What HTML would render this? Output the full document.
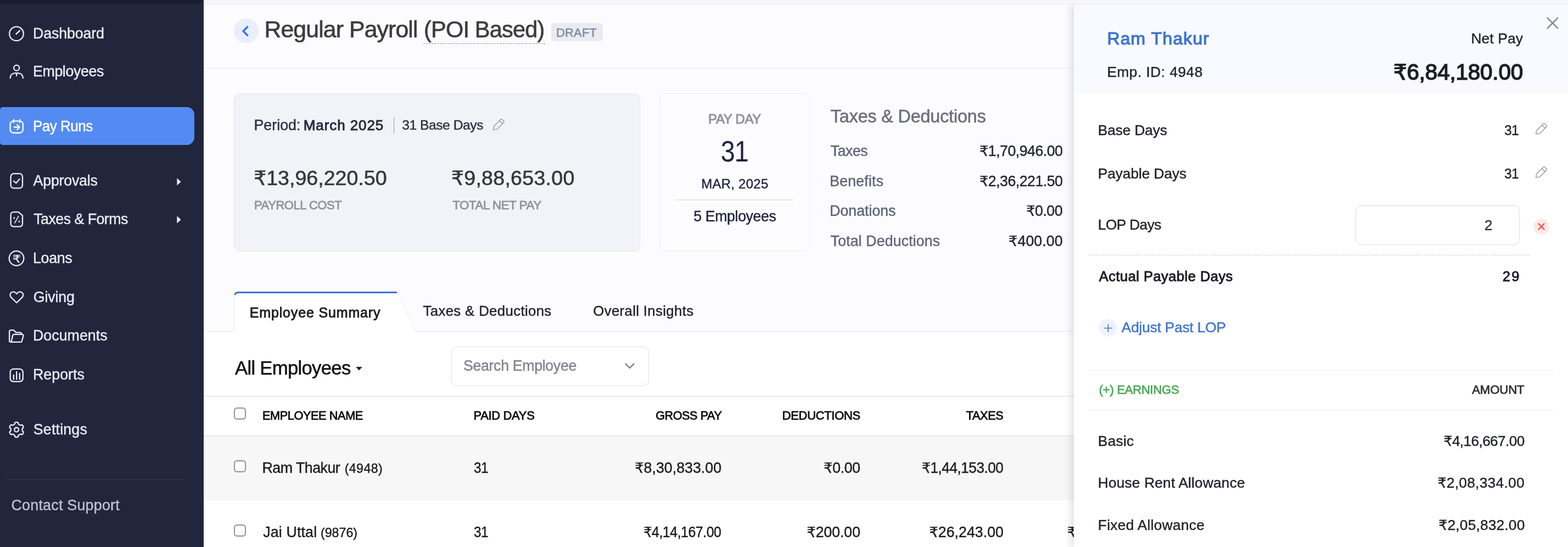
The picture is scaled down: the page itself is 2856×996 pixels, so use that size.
<!DOCTYPE html>
<html lang="en"><head>
<meta charset="utf-8">
<title>Regular Payroll (POI Based) - Pay Runs</title>
<style>
*{box-sizing:border-box;margin:0;padding:0}
html,body{width:2856px;height:996px;overflow:hidden;background:#fcfcff}
body{font-family:"Liberation Sans","DejaVu Sans",sans-serif;color:#222}
.r{font-family:"DejaVu Sans","Liberation Sans",sans-serif;font-size:.96em}
#app{position:relative;width:2856px;height:996px;overflow:hidden;transform:translateZ(0)}
.abs{position:absolute}
.t{position:absolute;white-space:nowrap;line-height:40px;height:40px;font-weight:400;-webkit-text-stroke:.016em currentColor}
.ra{text-align:right}
.ca{text-align:center}
.m{-webkit-text-stroke:.036em currentColor}
svg{display:block;position:absolute;overflow:visible}

/* sidebar */
.sb{position:absolute;left:0;top:0;width:371px;height:996px;background:#21263c;color:#e9ebf7}
.sb .cap{position:absolute;left:0;top:0;width:368px;height:8px;background:#1a1d30;border-radius:0 0 12px 0/0 0 8px 0}
.sb .active{position:absolute;left:0;top:195px;width:354px;height:69px;background:#538bf2;border-radius:5px 14px 14px 5px}
.sb .t{left:60px;font-size:26px;color:#e9ebf7}
.sb .sep{position:absolute;left:12px;top:872px;width:323px;height:1px;background:#32374e}
.sb .ic{fill:none;stroke:#e9ebf7;stroke-width:2.3;stroke-linecap:round;stroke-linejoin:round}
.sb .ar{fill:#e9ebf7}

/* main */
.strip{position:absolute;left:371px;top:0;width:2485px;height:8px;background:#f5f5fa;border-bottom:1px solid #ebebf0}
.hline{position:absolute;height:1px;background:#ebebf0}
.back{position:absolute;left:426px;top:34px;width:45px;height:45px;border-radius:50%;background:#e9eefb}
.title{left:482px;top:33.4px;font-size:41.5px;color:#3c3c3c}
.badge{position:absolute;left:1004px;top:42px;width:94px;height:33px;border-radius:5px;background:#e9ebf0}
.card1{position:absolute;left:426px;top:170px;width:740px;height:288px;border-radius:11px;background:#f2f3f8;border:1px solid #e6e7ec}
.card2{position:absolute;left:1202px;top:170px;width:273px;height:287px;border-radius:11px;background:#fdfdff;border:1px solid #ececf1}
.lbl{color:#9092a1}
.white{position:absolute;left:371px;top:604px;width:1585px;height:392px;background:#fff}
.row1{position:absolute;left:371px;top:794px;width:1585px;height:117px;background:#f7f7f7}
.cb{position:absolute;left:426px;width:22px;height:22px;border:2px solid #929292;border-radius:5.5px;background:#fff}
.search{position:absolute;left:822px;top:631px;width:360px;height:72px;border:1.5px solid #e0e0e6;border-radius:10px;background:#fff}
.th{font-size:22px;color:#0c0c0c}
.td{font-size:26px;color:#1c1c1c}
.kv{font-size:26px}
.k{color:#5e6378}
.v{color:#23252e}

/* panel */
.panel{position:absolute;left:1956px;top:8px;width:900px;height:988px;background:#fff;box-shadow:-5px 0 14px rgba(30,30,60,.14);clip-path:inset(0 0 0 -40px)}
.phead{position:absolute;left:0;top:0;width:900px;height:162px;background:#f9faff}
.input{position:absolute;left:2469px;top:374px;width:299px;height:72px;border:1.5px solid #dddde3;border-radius:10px;background:#fff}
.dash{position:absolute;height:0;border-top:1px dashed #cfcfd6}
.p{font-size:25.5px;color:#1f2128}
.link{color:#3c74d0}
</style>
</head>
<body>
<div id="app">

<!-- ================= main content ================= -->
<div class="strip"></div>
<div class="back"><svg style="left:0;top:0" width="45" height="45" viewBox="0 0 45 45"><path d="M24.7 15 L17.1 22.6 L24.7 30.2" fill="none" stroke="#3f74d6" stroke-width="3.6" stroke-linecap="round" stroke-linejoin="round"></path></svg></div>
<h1 class="t title" style="left: 481.5px;"><span class="f" style="font-size: 42.7px; letter-spacing: -0.85px;">Regular Payroll</span> <span class="f" style="font-size: 42.7px; letter-spacing: -0.85px; display: inline-block; transform: scaleX(0.9732); transform-origin: 0px 50%; margin-left: -0.2px;">(POI Based)</span></h1>
<div class="dash" style="left:771px;top:79px;width:222px;border-top:1px dashed #8d8d8d"></div>
<div class="badge"></div>
<div class="t" style="left: 1013px; top: 39.6px; font-size: 22px; color: rgb(123, 133, 156);"><span class="f" style="font-size: 21.8px; letter-spacing: 0.31px;">DRAFT</span></div>
<div class="hline" style="left:371px;top:124px;width:1585px"></div>

<div class="card1"></div>
<div class="t" style="left: 462.5px; top: 208px; font-size: 26px; color: rgb(42, 46, 69);"><span class="f" style="font-size: 26.8px;">Period:</span> <span class="f m" style="color: rgb(38, 42, 64); font-size: 26px; letter-spacing: 0.91px; margin-left: -1.9px;">March 2025</span></div>
<div class="abs" style="left:717px;top:214px;width:1px;height:29px;background:#8e92a3"></div>
<div class="t" style="left: 732.2px; top: 208.2px; font-size: 24px; color: rgb(42, 46, 69);"><span class="f" style="font-size: 24.7px; letter-spacing: -0.49px;">31 Base Days</span></div>
<svg style="left:895.5px;top:214px" width="25" height="25" viewBox="0 0 24 24"><path d="M2.6 21.2 L3.4 15.2 L15.2 3.4 a2 2 0 0 1 2.8 0 L20.6 6 a2 2 0 0 1 0 2.8 L8.8 20.6 Z M13 5.6 L18.4 11" fill="none" stroke="#a0a0a3" stroke-width="1.5" stroke-linejoin="round" stroke-linecap="round"></path></svg>
<div class="t" style="left: 462.2px; top: 303.6px; font-size: 36.5px; color: rgb(54, 55, 59);"><span class="f" style="font-size: 37.6px;"><span class="r">₹</span>13,96,220.50</span></div>
<div class="t lbl" style="left: 463.2px; top: 354.2px; font-size: 22px;"><span class="f m" style="font-size: 22.4px; letter-spacing: -0.45px; display: inline-block; transform: scaleX(0.9816); transform-origin: 0px 50%;">PAYROLL COST</span></div>
<div class="t" style="left: 822px; top: 303.6px; font-size: 36.5px; color: rgb(54, 55, 59);"><span class="f" style="font-size: 37.6px; letter-spacing: 0.26px;"><span class="r">₹</span>9,88,653.00</span></div>
<div class="t lbl" style="left: 824.2px; top: 354.2px; font-size: 22px;"><span class="f m" style="font-size: 22.4px; letter-spacing: -0.45px;">TOTAL NET PAY</span></div>

<div class="card2"></div>
<div class="t" style="left: 1290px; top: 196.5px; font-size: 24px; color: rgb(142, 145, 156);"><span class="f m" style="font-size: 24px; letter-spacing: -0.32px;">PAY DAY</span></div>
<div class="t" style="left: 1308.6px; top: 255.2px; font-size: 52px; color: rgb(32, 35, 63); -webkit-text-stroke: 0px;"><span class="f" style="font-size: 53.6px; letter-spacing: -1.07px; display: inline-block; transform: scaleX(0.8729); transform-origin: 50% 50%;">31</span></div>
<div class="t" style="left: 1277.2px; top: 314.6px; font-size: 24px; color: rgb(32, 35, 63);"><span class="f" style="font-size: 24px; letter-spacing: 0.25px;">MAR, 2025</span></div>
<div class="abs" style="left:1230px;top:363px;width:217px;height:2px;background:#e8e8ec"></div>
<div class="t" style="left: 1263.2px; top: 373.9px; font-size: 26px; color: rgb(32, 35, 63);"><span class="f" style="font-size: 26.8px; letter-spacing: -0.41px;">5 Employees</span></div>

<div class="t" style="left: 1512.8px; top: 192.2px; font-size: 31.5px; color: rgb(106, 109, 124);"><span class="f" style="font-size: 32.4px; letter-spacing: -0.19px;">Taxes &amp; Deductions</span></div>
<div class="t kv k" style="left: 1512.8px; top: 254.8px;"><span class="f" style="font-size: 26.8px; letter-spacing: -0.54px;">Taxes</span></div>
<div class="t kv v" style="left:1784px;top:254.8px"><span class="f" style="font-size: 26.8px; letter-spacing: -0.54px;"><span class="r">₹</span>1,70,946.00</span></div>
<div class="t kv k" style="left: 1511.2px; top: 309.9px;"><span class="f" style="font-size: 26.8px; letter-spacing: 0.15px;">Benefits</span></div>
<div class="t kv v" style="left:1784px;top:309.9px"><span class="f" style="font-size: 26.8px; letter-spacing: -0.54px;"><span class="r">₹</span>2,36,221.50</span></div>
<div class="t kv k" style="left: 1511.2px; top: 363.8px;"><span class="f" style="font-size: 26.8px; letter-spacing: -0.04px;">Donations</span></div>
<div class="t kv v" style="left: 1869.2px; top: 363.8px;"><span class="f" style="font-size: 26.8px; letter-spacing: -0.54px;"><span class="r">₹</span>0.00</span></div>
<div class="t kv k" style="left: 1512.8px; top: 418.9px;"><span class="f" style="font-size: 26.8px; letter-spacing: 0.08px;">Total Deductions</span></div>
<div class="t kv v" style="left: 1837.1px; top: 418.9px;"><span class="f" style="font-size: 26.8px; letter-spacing: 0.02px;"><span class="r">₹</span>400.00</span></div>

<!-- tabs -->
<div class="white"></div>
<div class="hline" style="left:371px;top:603px;width:1585px;background:#e9e9ef"></div>
<svg style="left:420px;top:527px" width="345" height="80" viewBox="0 0 345 80"><path d="M6.5 77 V13 a8 8 0 0 1 8 -8 H303 L338 77 Z" fill="#fff"></path><path d="M6.5 76.5 V13 a8 8 0 0 1 8 -8" fill="none" stroke="#e6e6ec" stroke-width="1"></path><path d="M303.5 5.5 L337.5 76.5" fill="none" stroke="#ececf1" stroke-width="1"></path><path d="M7.6 10 a7 7 0 0 1 7 -4.5 H303" fill="none" stroke="#3d72d2" stroke-width="3"></path></svg>
<div class="t" style="left: 454.8px; top: 549px; font-size: 25px; color: rgb(31, 31, 31);"><span class="f m" style="font-size: 25px; letter-spacing: 0.84px;">Employee Summary</span></div>
<div class="t" style="left: 770.5px; top: 545.9px; font-size: 25px; color: rgb(34, 34, 34);"><span class="f" style="font-size: 25.8px; letter-spacing: 0.34px;">Taxes &amp; Deductions</span></div>
<div class="t" style="left: 1080.3px; top: 545.9px; font-size: 25px; color: rgb(34, 34, 34);"><span class="f" style="font-size: 25.8px; letter-spacing: 0.33px;">Overall Insights</span></div>

<div class="t" style="left: 427.6px; top: 650px; font-size: 34px; color: rgb(17, 17, 17);"><span class="f" style="font-size: 35px; letter-spacing: -0.7px; display: inline-block; transform: scaleX(0.99); transform-origin: 0px 50%;">All Employees</span></div>
<svg style="left:648px;top:668.4px" width="12" height="6.4" viewBox="0 0 12 6.4"><path d="M0.2 0 H11.8 L6 6.4 Z" fill="#222"></path></svg>
<div class="search"></div>
<div class="t" style="left: 844px; top: 646.3px; font-size: 26px; color: rgb(127, 131, 143);"><span class="f" style="font-size: 26.8px; letter-spacing: -0.37px;">Search Employee</span></div>
<svg style="left:1136.7px;top:660.4px" width="20" height="13" viewBox="0 0 20 13"><path d="M2.5 2.5 L10 10 L17.5 2.5" fill="none" stroke="#8b8b8b" stroke-width="2.5" stroke-linecap="round" stroke-linejoin="round"></path></svg>

<!-- table -->
<div class="hline" style="left:371px;top:721px;width:1585px;background:#dcdcdc"></div>
<div class="hline" style="left:371px;top:793px;width:1585px;background:#dcdcdc"></div>
<div class="row1"></div>
<div class="cb" style="top:742.3px"></div>
<div class="t th" style="left: 478.2px; top: 737.3px;"><span class="f m" style="font-size: 22px; letter-spacing: -0.44px; display: inline-block; transform: scaleX(0.9887); transform-origin: 0px 50%;">EMPLOYEE NAME</span></div>
<div class="t th" style="left: 862.5px; top: 737.3px;"><span class="f m" style="font-size: 22px; letter-spacing: -0.35px;">PAID DAYS</span></div>
<div class="t th" style="left: 1191.6px; top: 737.3px;"><span class="f m" style="font-size: 22px; letter-spacing: -0.44px; display: inline-block; transform: scaleX(0.9819); transform-origin: 100% 50%;">GROSS PAY</span></div>
<div class="t th" style="left: 1424.7px; top: 737.3px;"><span class="f m" style="font-size: 22px; letter-spacing: -0.33px;">DEDUCTIONS</span></div>
<div class="t th" style="left: 1759.4px; top: 737.3px;"><span class="f m" style="font-size: 22px; letter-spacing: -0.44px; display: inline-block; transform: scaleX(0.9888); transform-origin: 100% 50%;">TAXES</span></div>

<div class="cb" style="top:838.2px"></div>
<div class="t td" style="left: 477.4px; top: 831.9px;"><span class="f" style="font-size: 26.8px; letter-spacing: -0.51px;">Ram Thakur</span> <span class="f" style="font-size: 23.2px; letter-spacing: 0.42px; margin-left: 1.2px;">(4948)</span></div>
<div class="t td" style="left: 863px; top: 831.9px;"><span class="f" style="font-size: 26.8px; letter-spacing: -0.54px; display: inline-block; transform: scaleX(0.9113); transform-origin: 0px 50%;">31</span></div>
<div class="t td" style="left: 1156.2px; top: 831.9px;"><span class="f" style="font-size: 26.8px;"><span class="r">₹</span>8,30,833.00</span></div>
<div class="t td" style="left: 1500.3px; top: 831.9px;"><span class="f" style="font-size: 26.8px; letter-spacing: -0.41px;"><span class="r">₹</span>0.00</span></div>
<div class="t td" style="left: 1676.4px; top: 831.9px;"><span class="f" style="font-size: 26.8px; letter-spacing: -0.54px; display: inline-block; transform: scaleX(0.9802); transform-origin: 100% 50%;"><span class="r">₹</span>1,44,153.00</span></div>

<div class="cb" style="top:954.8px"></div>
<div class="t td" style="left: 479.2px; top: 948.5px;"><span class="f" style="font-size: 26.8px; letter-spacing: 0.14px;">Jai Uttal</span> <span class="f" style="font-size: 23.2px; margin-left: -0.5px;">(9876)</span></div>
<div class="t td" style="left: 863px; top: 948.5px;"><span class="f" style="font-size: 26.8px; letter-spacing: -0.54px; display: inline-block; transform: scaleX(0.9113); transform-origin: 0px 50%;">31</span></div>
<div class="t td" style="left: 1162px; top: 948.5px;"><span class="f" style="font-size: 26.8px; letter-spacing: -0.54px; display: inline-block; transform: scaleX(0.9321); transform-origin: 100% 50%;"><span class="r">₹</span>4,14,167.00</span></div>
<div class="t td" style="left: 1469.4px; top: 948.5px;"><span class="f" style="font-size: 26.8px; letter-spacing: -0.11px;"><span class="r">₹</span>200.00</span></div>
<div class="t td" style="left: 1692.4px; top: 948.5px;"><span class="f" style="font-size: 26.8px;"><span class="r">₹</span>26,243.00</span></div>
<div class="t td" style="left: 1943.9px; top: 948.5px;"><span class="f" style="letter-spacing: -0.6px; font-size: 26.8px;"><span class="r">₹</span>3,87,724.00</span></div>

<!-- ================= sidebar ================= -->
<nav class="sb">
<div class="cap"></div>
<div class="active"></div>
<div class="sep"></div>
<svg class="ic" style="left:0;top:0" width="371" height="996" viewBox="0 0 371 996">
<circle cx="30" cy="61.4" r="12.8"></circle><path d="M29.4 62 L35.8 55.9" stroke-width="2.5"></path>
<circle cx="30.2" cy="123.7" r="5"></circle><path d="M18.7 142.3 C18.7 136.6 22.4 133.1 28 133.1 H32.4 C38 133.1 41.7 136.6 41.7 142.3 M30.2 133.1 V138"></path>
<g stroke="#fff"><rect x="18.6" y="220.3" width="23.2" height="21.7" rx="6"></rect><path d="M25 217.8 V223.2 M35.9 217.8 V223.2 M25.6 231.5 H35.3 M31.2 227 L35.7 231.5 L31.2 236"></path></g>
<rect x="19.6" y="316.2" width="21.4" height="26.4" rx="5.5"></rect><path d="M24.9 329.7 L29.3 333.4 L35.5 326.1"></path>
<path d="M24.6 386.2 H33.6 L41 392.4 V407.6 a5 5 0 0 1 -5 5 H24.6 a5 5 0 0 1 -5 -5 V391.2 a5 5 0 0 1 5 -5 Z"></path><path d="M33.7 393.9 L26.8 405.9" stroke-width="1.8"></path><circle cx="25.8" cy="396.8" r="1.5" fill="#e9ebf7" stroke="none"></circle><circle cx="34.8" cy="403.2" r="1.5" fill="#e9ebf7" stroke="none"></circle>
<circle cx="30" cy="470.4" r="13.3"></circle>
<text transform="translate(30.4 477.5) scale(1.26 1)" text-anchor="middle" font-family="DejaVu Sans, sans-serif" font-size="19" fill="#e9ebf7" stroke="#e9ebf7" stroke-width="0.35">₹</text>
<path d="M30.3 551.3 L20.4 541.6 C17.6 538.8 17.8 534.7 20.5 532.6 C23.3 530.4 27.3 531 30.3 535.1 C33.3 531 37.3 530.4 40.1 532.6 C42.8 534.7 43 538.8 40.2 541.6 Z"></path>
<path d="M20.4 622.9 H19.7 a2.6 2.6 0 0 1 -2.6 -2.6 V603.8 a2.6 2.6 0 0 1 2.6 -2.6 h4.6 a2 2 0 0 1 1.5 0.7 l3 3.4 h7.6 a3 3 0 0 1 3 3 v0.6 M25.3 608.9 h15.2 a2 2 0 0 1 1.9 2.5 l-2.4 9.6 a2.5 2.5 0 0 1 -2.4 1.9 H20.4 l2.9 -12.4 a2.1 2.1 0 0 1 2 -1.6z"></path>
<rect x="18.6" y="671.8" width="23.2" height="23.1" rx="6"></rect><path d="M24.8 683 V690.8 M30.2 677 V690.8 M35.8 680 V690.8"></path>
<path d="M30.1 768.8L30.6 768.8L31.0 768.8L31.5 768.9L32.0 769.1L32.4 769.3L32.8 769.6L33.2 770.0L33.2 771.6L33.5 772.0L33.8 772.3L34.1 772.6L34.4 772.8L34.7 773.1L35.0 773.3L35.3 773.4L35.6 773.6L35.9 773.8L36.3 773.9L36.6 774.1L37.0 774.2L37.4 774.3L37.9 774.3L39.3 773.5L39.8 773.6L40.3 773.9L40.7 774.1L41.0 774.4L41.4 774.8L41.7 775.2L41.9 775.6L42.1 776.0L42.3 776.4L42.5 776.9L42.6 777.4L42.6 777.9L42.6 778.4L42.4 778.9L41.0 779.7L40.8 780.1L40.6 780.5L40.6 780.9L40.5 781.3L40.5 781.7L40.5 782.0L40.5 782.4L40.5 782.8L40.5 783.1L40.5 783.5L40.6 783.9L40.6 784.3L40.8 784.7L41.0 785.1L42.4 785.9L42.6 786.4L42.6 786.9L42.6 787.4L42.5 787.9L42.3 788.4L42.1 788.8L41.9 789.2L41.7 789.6L41.4 790.0L41.0 790.4L40.7 790.7L40.3 790.9L39.8 791.2L39.3 791.3L37.9 790.5L37.4 790.5L37.0 790.6L36.6 790.7L36.3 790.9L35.9 791.0L35.6 791.2L35.3 791.4L35.0 791.5L34.7 791.7L34.4 792.0L34.1 792.2L33.8 792.5L33.5 792.8L33.2 793.2L33.2 794.8L32.8 795.2L32.4 795.5L32.0 795.7L31.5 795.9L31.0 796.0L30.6 796.0L30.1 796.0L29.6 796.0L29.2 796.0L28.7 795.9L28.2 795.7L27.8 795.5L27.4 795.2L27.0 794.8L27.0 793.2L26.7 792.8L26.4 792.5L26.1 792.2L25.8 792.0L25.5 791.7L25.2 791.5L24.9 791.4L24.6 791.2L24.3 791.0L23.9 790.9L23.6 790.7L23.2 790.6L22.8 790.5L22.3 790.5L20.9 791.3L20.4 791.2L19.9 790.9L19.5 790.7L19.2 790.4L18.8 790.0L18.5 789.6L18.3 789.2L18.1 788.8L17.9 788.4L17.7 787.9L17.6 787.4L17.6 786.9L17.6 786.4L17.8 785.9L19.2 785.1L19.4 784.7L19.6 784.3L19.6 783.9L19.7 783.5L19.7 783.1L19.7 782.8L19.8 782.4L19.7 782.0L19.7 781.7L19.7 781.3L19.6 780.9L19.6 780.5L19.4 780.1L19.2 779.7L17.8 778.9L17.6 778.4L17.6 777.9L17.6 777.4L17.7 776.9L17.9 776.4L18.1 776.0L18.3 775.6L18.5 775.2L18.8 774.8L19.2 774.4L19.5 774.1L19.9 773.9L20.4 773.6L20.9 773.5L22.3 774.3L22.8 774.3L23.2 774.2L23.6 774.1L23.9 773.9L24.3 773.8L24.6 773.6L24.9 773.4L25.2 773.3L25.5 773.1L25.8 772.8L26.1 772.6L26.4 772.3L26.7 772.0L27.0 771.6L27.0 770.0L27.4 769.6L27.8 769.3L28.2 769.1L28.7 768.9L29.2 768.8L29.6 768.8Z"></path><circle cx="30.1" cy="782.4" r="3.9"></circle>
</svg>
<svg class="ar" style="left:322px;top:323.6px" width="8" height="14" viewBox="0 0 8 14"><path d="M0.4 0.3 L7.6 7 L0.4 13.7 Z"></path></svg>
<svg class="ar" style="left:322px;top:393.4px" width="8" height="14" viewBox="0 0 8 14"><path d="M0.4 0.3 L7.6 7 L0.4 13.7 Z"></path></svg>

<div class="t" style="top:40.6px"><span class="f" style="font-size: 26.8px; letter-spacing: -0.15px;">Dashboard</span></div>
<div class="t" style="top:109.6px"><span class="f" style="font-size: 26.8px; letter-spacing: -0.41px;">Employees</span></div>
<div class="t" style="top:209.7px;color:#fff"><span class="f" style="font-size: 26.8px; letter-spacing: -0.54px; display: inline-block; transform: scaleX(0.9713); transform-origin: 0px 50%;">Pay Runs</span></div>
<div class="t" style="top: 309.2px; left: 60.6px;"><span class="f" style="font-size: 26.8px; letter-spacing: -0.23px;">Approvals</span></div>
<div class="t" style="top: 378.5px; left: 61.2px;"><span class="f" style="font-size: 26.8px; letter-spacing: -0.54px;">Taxes &amp; Forms</span></div>
<div class="t" style="top:449.7px"><span class="f" style="font-size: 26.8px; letter-spacing: -0.31px;">Loans</span></div>
<div class="t" style="top: 520.6px; left: 60.8px;"><span class="f" style="font-size: 26.8px; letter-spacing: -0.17px;">Giving</span></div>
<div class="t" style="top:590.6px"><span class="f" style="font-size: 26.8px;">Documents</span></div>
<div class="t" style="top:661.6px"><span class="f" style="font-size: 26.8px;">Reports</span></div>
<div class="t" style="top: 762.3px; left: 60.8px;"><span class="f" style="font-size: 26.8px; letter-spacing: 0.17px;">Settings</span></div>
<div class="t" style="left: 20.5px; top: 899.5px; color: rgb(191, 194, 206);"><span class="f" style="font-size: 26.8px; letter-spacing: 0.25px;">Contact Support</span></div>
</nav>

<!-- ================= employee panel ================= -->
<aside class="panel"><div class="phead"></div></aside>
<svg style="left:2817px;top:31px" width="22" height="22" viewBox="0 0 22 22"><path d="M1.6 1.6 L20.3 20.4 M20.3 1.6 L1.6 20.4" fill="none" stroke="#888" stroke-width="2.6" stroke-linecap="round"></path></svg>
<div class="t link" style="left: 2016.4px; top: 49.5px; font-size: 32px;"><span class="f m" style="font-size: 32px; letter-spacing: 1.13px;">Ram Thakur</span></div>
<div class="t p" style="left: 2016.4px; top: 110.9px;"><span class="f" style="font-size: 26.3px; letter-spacing: 0.49px;">Emp. ID: 4948</span></div>
<div class="t p" style="left: 2679.4px; top: 49.8px;"><span class="f" style="font-size: 26.3px; letter-spacing: 0.18px;">Net Pay</span></div>
<div class="t" style="left:2538px;top:110.6px;font-size:40px;color:#1d1f26"><span class="f m" style="font-size: 40.4px; letter-spacing: -0.17px;"><span class="r">₹</span>6,84,180.00</span></div>

<div class="t p" style="left: 1999.8px; top: 216.8px;"><span class="f" style="font-size: 26.3px; letter-spacing: -0.12px;">Base Days</span></div>
<div class="t p" style="left: 2738.4px; top: 216.5px;"><span class="f" style="font-size: 26.3px; letter-spacing: -0.53px; display: inline-block; transform: scaleX(0.9313); transform-origin: 100% 50%;">31</span></div>
<svg style="left:2795.2px;top:222.4px" width="25" height="25" viewBox="0 0 24 24"><path d="M2.6 21.2 L3.4 15.2 L15.2 3.4 a2 2 0 0 1 2.8 0 L20.6 6 a2 2 0 0 1 0 2.8 L8.8 20.6 Z M13 5.6 L18.4 11" fill="none" stroke="#a0a0a3" stroke-width="1.5" stroke-linejoin="round" stroke-linecap="round"></path></svg>
<div class="t p" style="left: 1999.8px; top: 295.9px;"><span class="f" style="font-size: 26.3px; letter-spacing: -0.08px;">Payable Days</span></div>
<div class="t p" style="left: 2738.4px; top: 295.5px;"><span class="f" style="font-size: 26.3px; letter-spacing: -0.53px; display: inline-block; transform: scaleX(0.9313); transform-origin: 100% 50%;">31</span></div>
<svg style="left:2795.2px;top:301.3px" width="25" height="25" viewBox="0 0 24 24"><path d="M2.6 21.2 L3.4 15.2 L15.2 3.4 a2 2 0 0 1 2.8 0 L20.6 6 a2 2 0 0 1 0 2.8 L8.8 20.6 Z M13 5.6 L18.4 11" fill="none" stroke="#a0a0a3" stroke-width="1.5" stroke-linejoin="round" stroke-linecap="round"></path></svg>
<div class="t p" style="left: 1999.8px; top: 389.4px;"><span class="f" style="font-size: 26.3px; letter-spacing: -0.53px;">LOP Days</span></div>
<div class="input"></div>
<div class="t p" style="left: 2703.8px; top: 389.8px; color: rgb(51, 51, 51);"><span class="f" style="font-size: 26.3px;">2</span></div>
<div class="abs" style="left:2793px;top:397.7px;width:29px;height:29px;border-radius:50%;background:#fde8e8"></div>
<svg style="left:2801.2px;top:406.4px" width="13" height="13" viewBox="0 0 13 13"><path d="M1.4 1.4 L11.6 11.6 M11.6 1.4 L1.4 11.6" fill="none" stroke="#e8554d" stroke-width="2.3" stroke-linecap="round"></path></svg>
<div class="dash" style="left:1983px;top:464px;width:803px"></div>
<div class="t p" style="left: 2001.8px; top: 483.3px; color: rgb(27, 29, 35);"><span class="f m" style="font-size: 25.5px; letter-spacing: 0.46px;">Actual Payable Days</span></div>
<div class="t p" style="left: 2736.8px; top: 483px; color: rgb(27, 29, 35);"><span class="f m" style="font-size: 25.5px; letter-spacing: 2.29px;">29</span></div>
<div class="abs" style="left:2002px;top:581px;width:32px;height:32px;border-radius:50%;background:#eef2fd"></div>
<svg style="left:2010.6px;top:589.5px" width="15" height="15" viewBox="0 0 15 15"><path d="M7.5 0.8 V14.2 M0.8 7.5 H14.2" fill="none" stroke="#3c74d0" stroke-width="1.6" stroke-linecap="round"></path></svg>
<div class="t p link" style="left: 2042.8px; top: 576.1px;"><span class="f" style="font-size: 26.3px; letter-spacing: -0.19px;">Adjust Past LOP</span></div>
<div class="hline" style="left:1983px;top:674px;width:846px;background:#ececf0"></div>
<div class="t" style="left: 2001.8px; top: 690.2px; font-size: 22px; color: rgb(74, 171, 87);"><span class="f m" style="font-size: 22px; letter-spacing: -0.25px;">(+) EARNINGS</span></div>
<div class="t" style="left: 2681.2px; top: 690.2px; font-size: 22px; color: rgb(51, 51, 51);"><span class="f m" style="font-size: 22px;">AMOUNT</span></div>
<div class="hline" style="left:1983px;top:746px;width:846px;background:#ececf0"></div>
<div class="t p" style="left: 1999.8px; top: 782.8px;"><span class="f" style="font-size: 26.3px; letter-spacing: 0.29px;">Basic</span></div>
<div class="t p" style="left: 2627.8px; top: 782.6px;"><span class="f" style="font-size: 26.3px; letter-spacing: -0.53px; display: inline-block; transform: scaleX(0.9899); transform-origin: 100% 50%;"><span class="r">₹</span>4,16,667.00</span></div>
<div class="t p" style="left: 1999.8px; top: 859.2px;"><span class="f" style="font-size: 26.3px; letter-spacing: 0.17px;">House Rent Allowance</span></div>
<div class="t p" style="left: 2618.4px; top: 858.9px;"><span class="f" style="font-size: 26.3px; letter-spacing: 0.29px;"><span class="r">₹</span>2,08,334.00</span></div>
<div class="t p" style="left: 1999.8px; top: 935.7px;"><span class="f" style="font-size: 26.3px; letter-spacing: 0.29px;">Fixed Allowance</span></div>
<div class="t p" style="left: 2620.3px; top: 935.7px;"><span class="f" style="font-size: 26.3px; letter-spacing: 0.18px;"><span class="r">₹</span>2,05,832.00</span></div>

</div>


</body></html>
